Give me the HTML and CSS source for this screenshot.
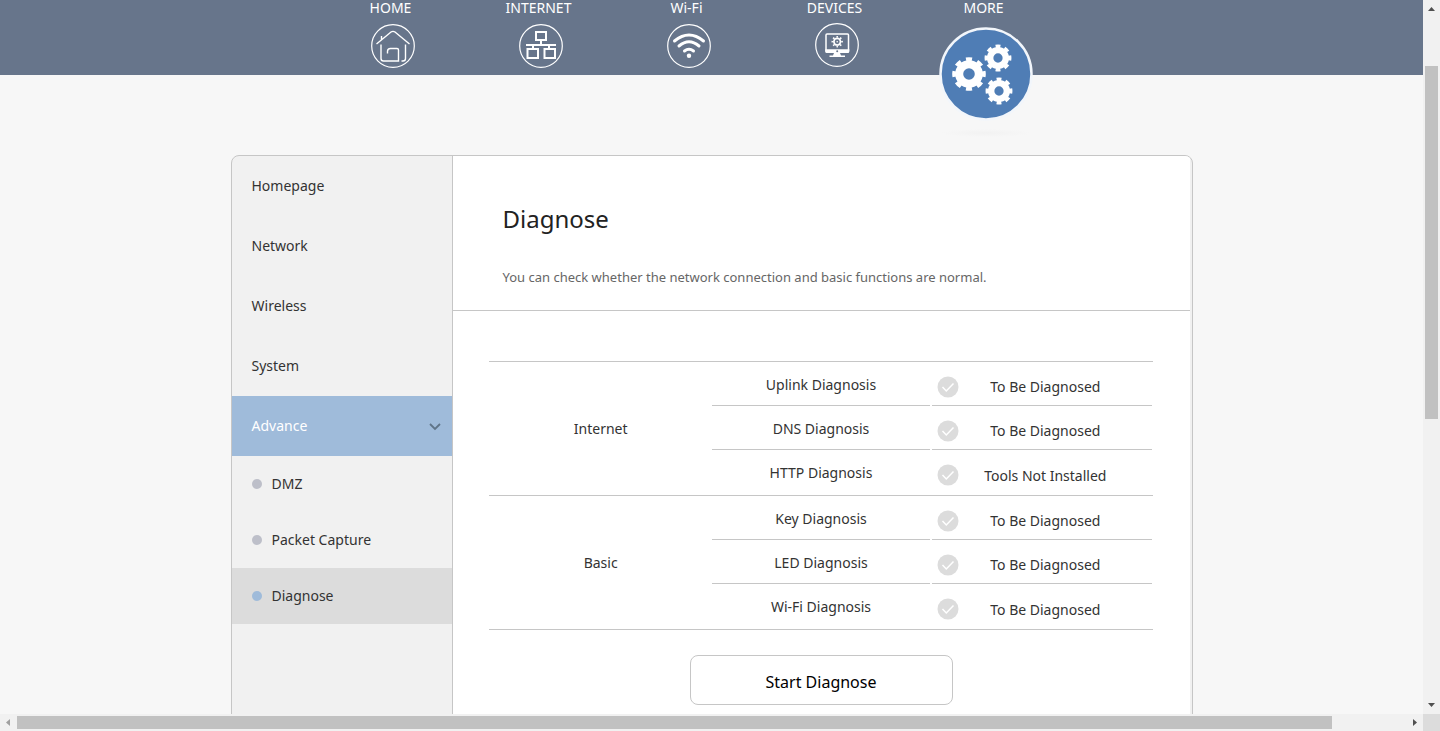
FILE: index.html
```html
<!DOCTYPE html>
<html lang="en">
<head>
<meta charset="utf-8">
<title>Diagnose</title>
<link rel="stylesheet" href="styles.css">
</head>
<body>
<div class="window">
  <div class="page">
    <header class="topbar">
      <nav class="topnav">
        <a class="topnav-item" href="#home"><span class="topnav-label">HOME</span>
          <svg class="topnav-icon" viewBox="0 0 44 44" fill="none" stroke="#fff" stroke-width="1.4">
            <circle cx="22" cy="22" r="21.3" stroke-width="1.2"/>
            <path d="M5.500 20 20 8q2-1.300 4 0l14.500 12M10.500 15.500v-3.500M10 20.500v14q0 2.500 2.500 2.500H27.500V26q0-1.500-1.500-1.500h-6.500q-3 0-3 3v2M34.500 20.500v14q0 2.500-2.500 2.500h-1.500"/>
          </svg></a>
        <a class="topnav-item" href="#internet"><span class="topnav-label">INTERNET</span>
          <svg class="topnav-icon" viewBox="0 0 44 44" fill="none" stroke="#fff" stroke-width="2">
            <circle cx="22" cy="22" r="21.300" stroke-width="1.200"/>
            <path d="M17 8h10v8H17zM22 16v5M7 21h30M14 21v4M30 21v4M8.500 25h10.500v9h-10.500zM25.500 25h10.500v9h-10.500z"/>
          </svg></a>
        <a class="topnav-item" href="#wifi"><span class="topnav-label">Wi-Fi</span>
          <svg class="topnav-icon" viewBox="0 0 44 44" fill="none" stroke="#fff" stroke-width="3" stroke-linecap="round">
            <circle cx="22" cy="22" r="21.300" stroke-width="1.200"/>
            <path d="M7.500 17q14.500-12 29 0M12 22q10-8.500 20 0M17.500 27q4.500-3.500 9 0"/>
            <circle cx="22" cy="31.800" r="2.200" fill="#fff" stroke="none"/>
          </svg></a>
        <a class="topnav-item" href="#devices"><span class="topnav-label">DEVICES</span>
          <svg class="topnav-icon topnav-icon-devices" viewBox="0 0 44 44" fill="none" stroke="#fff">
            <circle cx="22" cy="22" r="21.300" stroke-width="1.200"/>
            <rect x="11" y="11" width="22.500" height="18" rx="1" stroke-width="1.500"/>
            <path d="M10.300 26.200h24v2.300q0 1.500-1.500 1.500h-21q-1.500 0-1.500-1.500zM19 30h6l1 2.500h4v1.500H14.500v-1.500h3.500z" fill="#fff" stroke="none"/>
            <circle cx="22.200" cy="28.200" r="1" fill="#67758b" stroke="none"/>
            <circle cx="22.200" cy="18.700" r="3.300" stroke-width="1.700"/>
            <circle cx="22.200" cy="18.700" r="4.800" stroke-width="1.800" pathLength="24" stroke-dasharray="1.200 1.800" stroke-dashoffset=".6"/>
            <circle cx="22.200" cy="18.700" r=".8" fill="#fff" stroke="none"/>
          </svg></a>
        <a class="topnav-item topnav-item-current" href="#more"><span class="topnav-label">MORE</span>
          <svg class="topnav-icon topnav-icon-current" viewBox="0 0 94 94">
            <defs>
              <g id="gear" fill="none" stroke="#fff">
                <circle r="9.800" stroke-width="8"/>
                <circle r="14.300" stroke-width="5" pathLength="16" stroke-dasharray="1.050 .950" stroke-dashoffset=".525"/>
              </g>
            </defs>
            <circle cx="47" cy="47" r="45.500" fill="#4f7db5" stroke="#f2f6fb" stroke-width="2.500"/>
            <use href="#gear" transform="translate(30 47)"/>
            <use href="#gear" transform="translate(59 31) scale(.8)"/>
            <use href="#gear" transform="translate(60 64) scale(.8)"/>
          </svg>
          <span class="topnav-shadow"></span></a>
      </nav>
    </header>

    <div class="panel">
      <aside class="sidebar">
        <a class="side-item" href="#homepage">Homepage</a>
        <a class="side-item" href="#network">Network</a>
        <a class="side-item" href="#wireless">Wireless</a>
        <a class="side-item" href="#system">System</a>
        <a class="side-item side-item-open" href="#advance">Advance
          <svg class="side-chevron" viewBox="0 0 12 8" fill="none" stroke="#5f7488" stroke-width="1.800"><path d="M1 1l5 5 5-5"/></svg></a>
        <a class="side-sub" href="#dmz">DMZ</a>
        <a class="side-sub" href="#capture">Packet Capture</a>
        <a class="side-sub side-sub-current" href="#diagnose">Diagnose</a>
      </aside>
      <main class="content">
        <div class="intro">
          <h1 class="title">Diagnose</h1>
          <p class="desc">You can check whether the network connection and basic functions are normal.</p>
        </div>
        <svg class="defs" aria-hidden="true">
          <symbol id="tick" viewBox="0 0 22 22"><circle cx="11" cy="11" r="10.500" fill="#dcdcdc"/><path d="M5.500 11l3.800 4 7.200-7.500" fill="none" stroke="#fff" stroke-width="1.500"/></symbol>
        </svg>
        <table class="results">
          <tbody class="group">
            <tr><th class="group-name" rowspan="3" scope="rowgroup">Internet</th><td><div class="name">Uplink Diagnosis</div></td><td><div class="status"><svg class="tick"><use href="#tick"/></svg><span class="status-text">To Be Diagnosed</span></div></td></tr>
            <tr><td><div class="name">DNS Diagnosis</div></td><td><div class="status"><svg class="tick"><use href="#tick"/></svg><span class="status-text">To Be Diagnosed</span></div></td></tr>
            <tr><td><div class="name">HTTP Diagnosis</div></td><td><div class="status"><svg class="tick"><use href="#tick"/></svg><span class="status-text">Tools Not Installed</span></div></td></tr>
          </tbody>
          <tbody class="group">
            <tr><th class="group-name" rowspan="3" scope="rowgroup">Basic</th><td><div class="name">Key Diagnosis</div></td><td><div class="status"><svg class="tick"><use href="#tick"/></svg><span class="status-text">To Be Diagnosed</span></div></td></tr>
            <tr><td><div class="name">LED Diagnosis</div></td><td><div class="status"><svg class="tick"><use href="#tick"/></svg><span class="status-text">To Be Diagnosed</span></div></td></tr>
            <tr><td><div class="name">Wi-Fi Diagnosis</div></td><td><div class="status"><svg class="tick"><use href="#tick"/></svg><span class="status-text">To Be Diagnosed</span></div></td></tr>
          </tbody>
        </table>
        <button class="start" type="button">Start Diagnose</button>
      </main>
    </div>
  </div>

  <div class="vbar">
    <svg class="arrow" viewBox="0 0 17 17"><path d="M5 11h7L8.500 7z" fill="#505050"/></svg>
    <div class="vtrack"><div class="vthumb"></div></div>
    <svg class="arrow" viewBox="0 0 17 17"><path d="M5 6h7l-3.500 4z" fill="#505050"/></svg>
  </div>
  <div class="hbar">
    <svg class="arrow" viewBox="0 0 17 17"><path d="M10 5v7L6 8.500z" fill="#a0a0a0"/></svg>
    <div class="htrack"><div class="hthumb"></div></div>
    <svg class="arrow" viewBox="0 0 17 17"><path d="M7 5v7l4-3.500z" fill="#505050"/></svg>
  </div>
  <div class="corner"></div>
</div>
</body>
</html>
```
FILE: styles.css
```css
* { box-sizing: border-box; }

body {
  margin: 0;
  font-family: "Noto Sans", "Open Sans", sans-serif;
  font-size: 14px;
  color: #333;
}

a { color: inherit; text-decoration: none; }

.window {
  display: grid;
  grid-template-columns: minmax(0, 1fr) 17px;
  grid-template-rows: minmax(0, 1fr) 17px;
  height: 100vh;
}

.page { overflow: hidden; background: #f7f7f7; }

/* top navigation */
.topbar { height: 75px; background: #67758b; }

.topnav {
  display: flex;
  width: 962px;
  margin: 0 auto;
  padding-left: 88px;
}

.topnav-item {
  display: flex;
  flex-direction: column;
  align-items: center;
  width: 148px;
  color: #fff;
}

.topnav-item-current { width: 150px; }
.topnav-label { margin-right: 4px; line-height: 15px; }
.topnav-icon { width: 44px; height: 44px; margin-top: 9px; }
.topnav-icon-devices { margin-top: 8px; }
.topnav-icon-current { width: 94px; height: 94px; margin-top: 12px; }

.topnav-shadow {
  width: 90px;
  height: 8px;
  margin-top: 8px;
  background: radial-gradient(closest-side, #f2f2f2, #f7f7f7);
}

/* panel */
.panel {
  display: flex;
  width: 962px;
  min-height: 700px;
  margin: 80px auto 0;
  padding-right: 2px;
  border: 1px solid #c6c6c6;
  border-radius: 8px;
  background: #f1f1f1;
  overflow: hidden;
}

.sidebar {
  flex: none;
  width: 221px;
  border-right: 1px solid #c6c6c6;
}

.side-item {
  display: flex;
  align-items: center;
  justify-content: space-between;
  height: 60px;
  padding: 0 11px 2px 20px;
}

.side-item-open { background: #9fbbda; color: #fff; }
.side-chevron { width: 12px; height: 8px; margin-top: 3px; }

.side-sub {
  display: flex;
  align-items: center;
  gap: 10px;
  height: 56px;
  padding: 0 0 2px 20px;
}

.side-sub::before {
  content: "";
  width: 10px;
  height: 10px;
  margin-top: 2px;
  border-radius: 50%;
  background: #bdbfc9;
}

.side-sub-current { background: #dcdcdc; }
.side-sub-current::before { background: #9fbbda; }

.content { flex: 1; background: #fff; }

.intro {
  height: 155px;
  padding: 46px 50px 0;
  border-bottom: 1px solid #c6c6c6;
}

.title {
  margin: 0;
  font-size: 24px;
  font-weight: 400;
  line-height: 34px;
  color: #222;
}

.desc {
  margin: 31px 0 0;
  font-size: 13px;
  line-height: 20px;
  color: #666;
}

.defs { display: none; }

/* result table */
.results {
  width: calc(100% - 73px);
  margin: 50px 37px 0 36px;
  border-collapse: collapse;
  table-layout: fixed;
}

.group { border-top: 1px solid #c6c6c6; border-bottom: 1px solid #c6c6c6; }
.group-name { padding: 0 0 0 3px; font-weight: 400; }
.results td { padding: 0; }

.name, .status {
  height: 44px;
  margin: 0 1px 0 2px;
  border-bottom: 1px solid #c6c6c6;
}

.name { line-height: 46px; text-align: center; }
.status { display: flex; align-items: center; margin-left: 1px; padding: 6px 20px 0 5px; }
.group tr:last-child .name, .group tr:last-child .status { height: 45px; border-bottom: 0; }
.group tr:last-child .status { padding-bottom: 1px; }
.tick { width: 22px; height: 22px; }
.status-text { flex: 1; text-align: center; }

.start {
  display: block;
  width: 263px;
  height: 50px;
  margin: 25px auto 0;
  padding: 4px 0 0;
  border: 1px solid #c6c6c6;
  border-radius: 8px;
  background: #fff;
  font: inherit;
  font-size: 16px;
  color: #000;
}

/* scroll bars */
.vbar { display: flex; flex-direction: column; background: #f1f1f1; }
.hbar { display: flex; background: #f1f1f1; }
.arrow { flex: none; width: 17px; height: 17px; }
.vtrack { flex: 1; padding: 49px 2px 0; }
.vthumb { height: 56%; background: #c1c1c1; }
.htrack { flex: 1; padding: 2px 0; }
.hthumb { width: 94.700%; height: 13px; background: #c1c1c1; }
.corner { background: #dcdcdc; }
```
